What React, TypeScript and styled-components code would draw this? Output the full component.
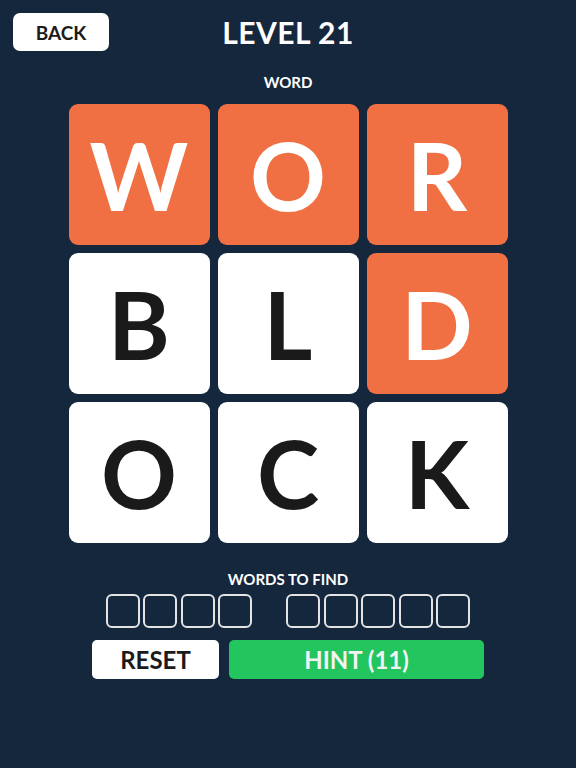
import React from 'react'
import styled, { createGlobalStyle } from 'styled-components'

const GlobalStyle = createGlobalStyle`
  html, body {
    margin: 0;
    padding: 0;
    background: #14273d;
    font-family: Lato, "Open Sans", sans-serif;
  }
`

type Tile = { letter: string; found: boolean }

const tiles: Tile[] = [
  { letter: 'W', found: true },
  { letter: 'O', found: true },
  { letter: 'R', found: true },
  { letter: 'B', found: false },
  { letter: 'L', found: false },
  { letter: 'D', found: true },
  { letter: 'O', found: false },
  { letter: 'C', found: false },
  { letter: 'K', found: false },
]

const wordLengths = [4, 5]

export default function App() {
  return (
    <>
      <GlobalStyle />
      <Screen>
        <Header>
          <BackButton>BACK</BackButton>
          <Title>LEVEL 21</Title>
          <span />
        </Header>
        <Label>WORD</Label>
        <Board>
          {tiles.map((t, i) => (
            <LetterTile key={i} found={t.found}>
              {t.letter}
            </LetterTile>
          ))}
        </Board>
        <FindLabel>WORDS TO FIND</FindLabel>
        <Slots>
          {wordLengths.map((n, i) => (
            <SlotGroup key={i}>
              {Array.from({ length: n }).map((_, j) => (
                <Slot key={j} />
              ))}
            </SlotGroup>
          ))}
        </Slots>
        <Actions>
          <ResetButton>RESET</ResetButton>
          <HintButton>HINT (11)</HintButton>
        </Actions>
      </Screen>
    </>
  )
}

const Screen = styled.div`
  width: 576px;
  height: 768px;
  display: flex;
  flex-flow: column;
  align-items: center;
  background: #14273d;
`

const Header = styled.header`
  width: 100%;
  box-sizing: border-box;
  display: grid;
  grid-template-columns: 1fr auto 1fr;
  align-items: center;
  padding: 13px 13px 0;
`

const BackButton = styled.button`
  justify-self: start;
  width: 96px;
  height: 38px;
  border: none;
  border-radius: 7px;
  background: #fff;
  color: #1b1b1b;
  font-family: Lato, sans-serif;
  font-weight: 700;
  font-size: 19px;
  padding: 0;
`

const Title = styled.h1`
  margin: 0;
  color: #fff;
  font-weight: 700;
  font-size: 30px;
  letter-spacing: 0.5px;
`

const Label = styled.div`
  margin-top: 22px;
  color: #fff;
  font-weight: 700;
  font-size: 15px;
  line-height: 18px;
`

const Board = styled.div`
  margin-top: 13px;
  display: grid;
  grid-template-columns: repeat(3, 141px);
  grid-auto-rows: 141px;
  gap: 8px;
`

const LetterTile = styled.div<{ found: boolean }>`
  border-radius: 9px;
  display: flex;
  align-items: center;
  justify-content: center;
  background: ${(p) => (p.found ? '#f07044' : '#fff')};
  color: ${(p) => (p.found ? '#fff' : '#1a1a1a')};
  font-weight: 700;
  font-size: 94px;
  line-height: 1;
`

const FindLabel = styled.div`
  margin-top: 27px;
  color: #fff;
  font-weight: 700;
  font-size: 15px;
  line-height: 18px;
`

const Slots = styled.div`
  margin-top: 6px;
  display: flex;
  gap: 34px;
`

const SlotGroup = styled.div`
  display: flex;
  gap: 3.5px;
`

const Slot = styled.div`
  box-sizing: border-box;
  width: 34px;
  height: 34px;
  border: 2px solid #e4e4e4;
  border-radius: 6px;
`

const Actions = styled.div`
  margin-top: 12px;
  display: flex;
  gap: 10px;
`

const ActionButton = styled.button`
  height: 39px;
  border: none;
  border-radius: 5px;
  font-family: Lato, sans-serif;
  font-weight: 700;
  font-size: 24px;
  padding: 0;
`

const ResetButton = styled(ActionButton)`
  width: 127px;
  background: #fff;
  color: #1b1b1b;
`

const HintButton = styled(ActionButton)`
  width: 255px;
  background: #22c55e;
  color: #f2f2f2;
`
